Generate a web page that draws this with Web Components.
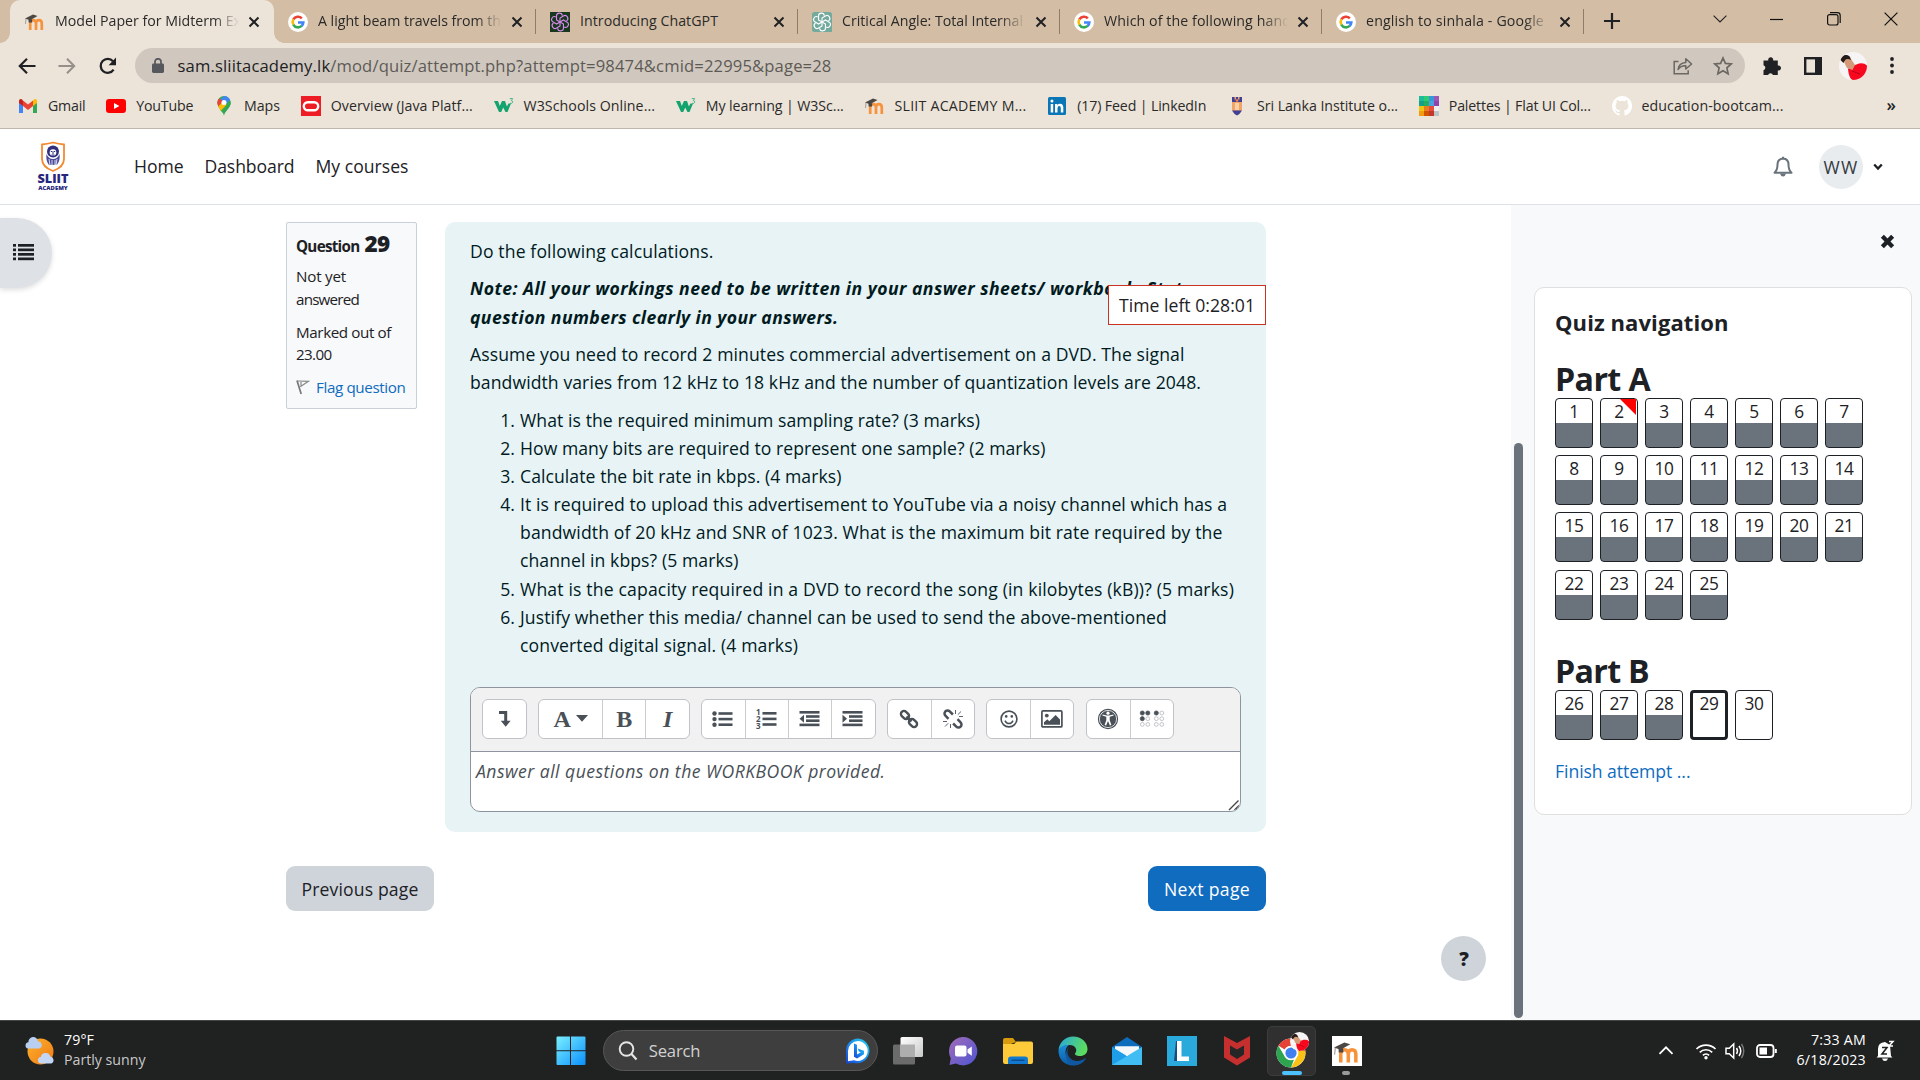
<!DOCTYPE html>
<html lang="en">
<head>
<meta charset="utf-8">
<title>Model Paper for Midterm Exam</title>
<style>
html,body{margin:0;padding:0}
body{width:1920px;height:1080px;overflow:hidden;background:#fff;font-family:"Open Sans","Noto Sans",sans-serif;color:#1d2125}
</style>
</head>
<body>
<desktop-screen></desktop-screen>
<script>
const define = (name, css, html, setup) => customElements.define(name, class extends HTMLElement {
  connectedCallback() {
    if (this.shadowRoot) return;
    const root = this.attachShadow({ mode: 'open' });
    root.innerHTML = `<style>*{box-sizing:border-box}${css}</style>` + (typeof html === 'function' ? html(this) : html);
    if (setup) setup(this, root);
  }
});

/* ---------- icons: [width, height, viewBox, body] ---------- */
const moodleM = `<path d="M5.2 18V11.6q0-3.4 2.9-3.4t2.9 3.4V18M11 11.6q0-3.4 2.9-3.4t2.9 3.4V18" fill="none" stroke="#f7923a" stroke-width="2.7"/><path d="M0 6.6 8 2.6l4.5 1.5L5 8.3z" fill="#4b4744"/><path d="M3.5 7.2h3.6v3.2H3.6z" fill="#4b4744"/><path d="M1 6.5 .5 12" stroke="#8a7f78" stroke-width=".7"/>`;
const avatar = `<clipPath id="av"><circle cx="14" cy="14" r="14"/></clipPath><g clip-path="url(#av)"><rect width="28" height="28" fill="#f6f4f4"/><path d="M9 17c2-2 4-4 7-4l4-1.500q5-1 8 2V20c-3 3-3 8-11 9-5-1-7-3-8-12z" fill="#f8081f"/><path d="M4 8c2-3 6-3 8-1l4 6-2.500 5L8 16z" fill="#d49a78"/><path d="M1.500 8C2 3 8 1.500 11 5l1 3C8 6 6 7 4.500 11z" fill="#251b18"/><path d="m13 19 8 3" stroke="#b50516" stroke-width="1"/></g>`;
const G = `<circle cx="12" cy="12" r="12" fill="#fff"/><g fill="none" stroke-width="3.1"><path d="M16.6 7.6A6.4 6.4 0 0 0 6.4 8.9" stroke="#ea4335"/><path d="M6.4 8.9a6.4 6.4 0 0 0 0 6.2" stroke="#fbbc05"/><path d="M6.4 15.1a6.4 6.4 0 0 0 10 1.6" stroke="#34a853"/><path d="M16.3 16.8a6.4 6.4 0 0 0 2.1-4.3H12" stroke="#4285f4"/></g>`;
const knot = c => `<g fill="none" stroke="${c}" stroke-width="1.35">${[0,60,120,180,240,300].map(a=>`<path d="M12 12V7.2l4-2.3a3.4 3.4 0 0 1 3.8 5.8" transform="rotate(${a} 12 12)"/>`).join('')}</g>`;
const w3 = `<path d="M0 5h4l1.800 5L8 5h3l1.900 5.500L14.500 7.500H17L13.500 16h-2L9.200 11.500 7.200 16H5z" fill="#12a36e"/><path d="M15.800 2.600h2.900L17.300 4.600q1.700.2 1.400 1.700-.4 1.500-2.700 1" fill="none" stroke="#3fb88b" stroke-width="1"/>`;
const K = '#495057';
const bars = (x, ys, w) => ys.map(y => `<rect x="${x}" y="${y}" width="${w}" height="2.6" fill="${K}"/>`).join('');
const chainA = `<rect x="1.5" y="3" width="9" height="6" rx="3" transform="rotate(45 6 6)" /><rect x="9.5" y="11" width="9" height="6" rx="3" transform="rotate(45 14 14)"/>`;
const ICONS = {
  moodle:[20,20,'0 0 20 20',moodleM],
  google:[20,20,'0 0 24 24',G],
  gptdark:[20,20,'0 0 24 24',`<rect width="24" height="24" fill="#17381f"/>${knot('#d98aec')}`],
  gpt:[20,20,'0 0 24 24',`<path d="M3 0h18q3 0 3 3v21H3q-3 0-3-3V3q0-3 3-3z" fill="#74aa9c"/>${knot('#fff')}`],
  close:[12,12,'0 0 12 12','<path d="m1.5 1.5 9 9m0-9-9 9" stroke="#202124" stroke-width="2"/>'],
  plus:[16,16,'0 0 16 16','<path d="M8 0v16M0 8h16" stroke="#202124" stroke-width="2.2"/>'],
  caption_down:[14,8,'0 0 14 8','<path d="m.6.6 6.4 6.4L13.4.6" fill="none" stroke="#202124" stroke-width="1.1"/>'],
  min:[14,14,'0 0 14 14','<path d="M0 7.5h13" stroke="#111" stroke-width="1.2"/>'],
  restore:[14,14,'0 0 14 14','<rect x=".6" y="2.6" width="10.4" height="10.4" rx="2" fill="none" stroke="#111" stroke-width="1.2"/><path d="M3 .7h7.4q2.8 0 2.8 2.8V11" fill="none" stroke="#111" stroke-width="1.2"/>'],
  xwin:[14,14,'0 0 14 14','<path d="m.6.6 12.8 12.8m0-12.8L.6 13.4" stroke="#111" stroke-width="1.2"/>'],
  back:[18,18,'0 0 18 18','<path d="M17.5 9H2M9 1.8 1.8 9 9 16.2" fill="none" stroke="#202124" stroke-width="2.2"/>'],
  fwd:[18,18,'0 0 18 18','<path d="M.5 9H16M9 1.8 16.2 9 9 16.2" fill="none" stroke="#96908a" stroke-width="2"/>'],
  reload:[20,18,'0 0 20 18','<path d="M15.6 12.6A7 7 0 1 1 15 4.2" fill="none" stroke="#202124" stroke-width="2.3"/><path d="M18 .6v7.6h-7.4z" fill="#202124"/>'],
  lock:[12,16,'0 0 12 16','<rect y="5.5" width="12" height="9.5" rx="1.4" fill="#55585d"/><path d="M3 6V3.8a3 3 0 0 1 6 0V6" fill="none" stroke="#55585d" stroke-width="1.7"/>'],
  share:[20,18,'0 0 20 18','<path d="M5.5 4.5H1.2v12.3h14v-3.6" fill="none" stroke="#6b6763" stroke-width="1.5"/><path d="M5 12.5q.8-6.5 7.8-7V1.8L18.6 7l-5.8 5V8.8q-5-.3-7.8 3.7z" fill="none" stroke="#6b6763" stroke-width="1.5" stroke-linejoin="round"/>'],
  star:[20,20,'0 0 20 20','<path d="m10 2 2.4 5.4 5.8.6-4.3 3.900 1.200 5.800L10 14.700l-5.100 3 1.200-5.800L1.800 8l5.800-.6z" fill="none" stroke="#6b6763" stroke-width="1.7"/>'],
  puzzle:[20,20,'0 0 20 20','<path d="M1.5 4.5h4.8a2.5 2.5 0 1 1 4.8 0h4.7v5a2.5 2.5 0 1 1 0 4.8V19h-4.9a2.5 2.5 0 0 0-4.8 0H1.500v-4.800a2.600 2.600 0 0 0 0-5z" fill="#202124"/>'],
  panel:[18,18,'0 0 18 18','<rect x="1.2" y="1.2" width="15.6" height="15.6" fill="none" stroke="#202124" stroke-width="2.4"/><path d="M11 1h6v16h-6z" fill="#202124"/>'],
  avatar:[28,28,'0 0 28 28',avatar],
  dots:[4,17,'0 0 4 17','<g fill="#202124"><circle cx="2" cy="2" r="1.9"/><circle cx="2" cy="8.5" r="1.9"/><circle cx="2" cy="15" r="1.9"/></g>'],
  gmail:[20,20,'0 0 20 20','<path d="M1 5v12h4V9z" fill="#4285f4"/><path d="M19 5v12h-4V9z" fill="#34a853"/><path d="m15 4.5-5 4-5-4V10l5 4 5-4z" fill="#ea4335"/><path d="M1 6V4.8Q1 3 2.8 3q1 0 2.2 1.4V10L1 7z" fill="#c5221f"/><path d="M19 6V4.8Q19 3 17.2 3q-1 0-2.2 1.4V10l4-3z" fill="#fbbc04"/>'],
  youtube:[20,20,'0 0 20 20','<rect y="3" width="20" height="14" rx="3.2" fill="#f00"/><path d="m8 7 5.4 3L8 13z" fill="#fff"/>'],
  maps:[20,20,'0 0 20 20','<path d="M10 20C9.600 15.500 3.400 12.500 3.400 6.600A6.600 6.600 0 0 1 16.600 6.600C16.600 12.500 10.400 15.500 10 20z" fill="#34a853"/><path d="M10 0a6.600 6.600 0 0 1 6 4L8 12.600 3.400 6.600z" fill="#4285f4"/><path d="M5.2 2.200 9 5.600 4.400 10.600Q2 5.500 5.200 2.200z" fill="#ea4335"/><path d="M16.200 4.200Q17.800 9 13.800 12.600l-4.200 5L6 14z" fill="#34a853"/><path d="m4.300 10.400 4.500-5 3.800 3.400L6.700 15z" fill="#fbbc04"/><circle cx="10" cy="6.600" r="2.500" fill="#fff"/>'],
  oracle:[20,20,'0 0 20 20','<rect width="20" height="20" fill="#ee1c25"/><rect x="2.8" y="6.3" width="14.4" height="8" rx="4" fill="none" stroke="#fff" stroke-width="2.4"/>'],
  w3:[20,20,'0 0 20 20',w3],
  linkedin:[20,20,'0 0 20 20','<rect x="1" y="1" width="18" height="18" rx="1.5" fill="#0a76b5"/><path d="M3.7 8h2.5v8.4H3.7zM8 8h2.4v1.2q.8-1.4 2.7-1.4 3.2 0 3.2 3.8v4.8h-2.5V12q0-2-1.5-2-1.800 0-1.800 2.200v4.200H8z" fill="#fff"/><circle cx="4.950" cy="5" r="1.500" fill="#fff"/>'],
  crest:[20,20,'0 0 20 20','<path d="M5 1h10v13q-1.500 3.500-5 5-3.500-1.500-5-5z" fill="#f0a46a"/><path d="M5 1h2.500v2.500h1.500V1h2v2.500h1.500V1H15v5H5z" fill="#3f3f95"/><path d="M8 7h4v7H8z" fill="#fbd0a2"/><path d="M5 14.500h10Q13 18 10 19.500 7 18 5 14.500z" fill="#3f3f95"/><circle cx="10" cy="4.500" r="1.300" fill="#f58a35"/>'],
  palettes:[20,20,'0 0 20 20',['#1abc9c','#2ecc71','#3498db','#9b59b6','#16a085','#27ae60','#4aa3df','#8e44ad','#f1c40f','#e67e22','#e74c3c','#ecf0f1','#f39c12','#d35400','#c0392b','#bdc3c7'].map((c,i)=>`<rect x="${i%4*5}" y="${(i>>2)*5}" width="5" height="5" fill="${c}"/>`).join('')],
  github:[20,20,'0 0 16 16','<path d="M8 0a8 8 0 0 0-2.500 15.600c.400.100.550-.170.550-.380v-1.500c-2.200.500-2.700-.950-2.700-.950-.360-.920-.890-1.170-.890-1.170-.720-.500.060-.490.060-.490.800.060 1.230.830 1.230.830.710 1.220 1.870.870 2.330.660.070-.520.280-.870.500-1.070-1.780-.200-3.640-.890-3.640-3.950 0-.870.310-1.590.820-2.150-.080-.200-.360-1.020.080-2.120 0 0 .670-.210 2.200.820a7.600 7.600 0 0 1 4 0c1.530-1.040 2.200-.820 2.200-.820.440 1.100.160 1.920.080 2.120.510.560.820 1.270.820 2.150 0 3.070-1.870 3.750-3.650 3.950.290.250.540.730.540 1.480v2.200c0 .210.150.460.550.380A8 8 0 0 0 8 0z" fill="#fff"/>'],
  sliit:[34,50,'0 0 34 50','<path d="M6 3.500q5-.5 11-2 6 1.500 11 2V18q0 8-11 12Q6 26 6 18z" fill="#fff" stroke="#f28a30" stroke-width="1.800"/><circle cx="17" cy="10.500" r="6" fill="#2f2f7d"/><circle cx="17" cy="11.500" r="3.300" fill="#fff"/><path d="M14.800 10.500h1.500m1.400 0h1.500m-3.700 3.500h3M17 10.500v2.500" stroke="#2f2f7d" stroke-width="1"/><path d="M10.500 13q-1 6.500 2.500 11l8-.2q3.500-4.500 2.500-10.800-2 5-6.500 5t-6.500-5z" fill="#4b4b9b"/><path d="m13 18 1 6m2-5v6m3-6v6m2-7-1 6" stroke="#fff" stroke-width=".800"/><text x="17" y="42.200" font-family="Open Sans" font-weight="800" font-size="12.400" text-anchor="middle" textLength="31" lengthAdjust="spacingAndGlyphs" fill="#26267c">SLIIT</text><text x="17" y="48.800" font-family="Open Sans" font-weight="800" font-size="5.600" text-anchor="middle" textLength="29.500" lengthAdjust="spacingAndGlyphs" fill="#26267c">ACADEMY</text>'],
  bell:[20,22,'0 0 20 22','<path d="M1.500 16.800q3-2.600 3-8.200Q4.500 3 10 2.600q5.500.400 5.500 6 0 5.600 3 8.200z" fill="none" stroke="#6a737b" stroke-width="2" stroke-linejoin="round"/><path d="M10 3V.8" stroke="#6a737b" stroke-width="2"/><path d="M7.200 17.500h5.600q-.4 3-2.800 3t-2.800-3z" fill="#6a737b"/>'],
  chev:[10,8,'0 0 10 8','<path d="M1.200 1.500 5 5.600l3.800-4.100" fill="none" stroke="#1d2125" stroke-width="2.300"/>'],
  list:[22,17,'0 0 22 17','<g fill="#1d2125">'+[0,4.5,9,13.5].map(y=>`<rect y="${y}" width="3" height="2.700"/><rect x="5" y="${y}" width="16" height="2.700"/>`).join('')+'</g>'],
  flag:[14,16,'0 0 14 16','<path d="M1 1.500 5.200 15" stroke="#777" stroke-width="1.700"/><path d="m1.500 2 11 .3-8.300 5.500M5 3v3.500" fill="none" stroke="#888" stroke-width="1.200"/>'],
  bigx:[15,15,'0 0 14 14','<path d="m2.200 2.200 9.600 9.600m0-9.600-9.600 9.600" stroke="#1d2125" stroke-width="4"/>'],
  leveldown:[14,18,'0 0 14 18',`<path d="M1 2.400h6.700V12" fill="none" stroke="${K}" stroke-width="3"/><path d="M2.800 10.800h9.800L7.700 16.800z" fill="${K}"/>`],
  caret:[12,7,'0 0 12 7',`<path d="M0 0h12L6 6.800z" fill="${K}"/>`],
  ul:[22,18,'0 0 22 18',bars(6.5,[2.2,7.8,13.4],14)+[3.5,9.1,14.7].map(y=>`<circle cx="2.500" cy="${y}" r="2.200" fill="${K}"/>`).join('')],
  ol:[22,20,'0 0 22 20',bars(6.5,[3,8.600,14.200],14)+[['1',6.2],['2',12.9],['3',19.600]].map(a=>`<text x="0" y="${a[1]}" font-family="Open Sans" font-weight="700" font-size="8" fill="${K}">${a[0]}</text>`).join('')],
  outdent:[22,18,'0 0 22 18',bars(.5,[1,13.600],20)+bars(7,[5.2,9.4],13.5)+`<path d="M5 4.800v8L.5 8.800z" fill="${K}"/>`],
  indent:[22,18,'0 0 22 18',bars(.5,[1,13.600],20)+bars(7,[5.2,9.4],13.5)+`<path d="M.5 4.800v8L5 8.800z" fill="${K}"/>`],
  link:[20,20,'0 0 20 20',`<g fill="none" stroke="${K}" stroke-width="2.400">${chainA}<path d="m7.500 7.500 5 5"/></g>`],
  unlink:[20,20,'0 0 20 20',`<g fill="none" stroke="${K}" stroke-width="2.500"><path d="M5.500 9.800 2.400 6.700a3 3 0 0 1 4.300-4.300l3.200 3.100M14.500 10.200l3.100 3.100a3 3 0 0 1-4.300 4.300l-3.200-3.100"/></g><path d="M12.500 5V1m2.300 4.700L18 2.500m-2 5h4M7.500 15v4m-2.300-4.700L2 17.500m2-5H0" stroke="${K}" stroke-width=".900"/>`],
  smile:[20,20,'0 0 20 20',`<circle cx="10" cy="10" r="7.900" fill="none" stroke="${K}" stroke-width="1.600"/><circle cx="7.200" cy="7.400" r="1.300" fill="${K}"/><circle cx="12.800" cy="7.400" r="1.300" fill="${K}"/><path d="M6 11.600q1.300 3 4 3t4-3" fill="none" stroke="${K}" stroke-width="1.500"/>`],
  image:[22,20,'0 0 22 20',`<rect x=".9" y="1.900" width="20" height="16" rx="1" fill="none" stroke="${K}" stroke-width="1.700"/><circle cx="5.800" cy="6.600" r="1.900" fill="${K}"/><path d="M3 15.800v-2.600l3.300-3 2 2L14.600 6l4.400 4.600v5.200z" fill="${K}"/>`],
  access:[22,22,'0 0 22 22',`<circle cx="11" cy="11" r="9.400" fill="${K}" stroke="${K}" stroke-width="1.500"/><circle cx="11" cy="11" r="8.600" fill="none" stroke="#fff" stroke-width=".800"/><circle cx="11" cy="5.200" r="1.600" fill="#fff"/><path d="m5.300 7.600 4 1.200v3.400L7.600 17l1.500.6L11 13l1.900 4.600 1.500-.6-1.700-4.800V8.800l4-1.200-.3-1.200-4.400 1.100h-2L5.600 6.400z" fill="#fff"/>`],
  braille:[26,18,'0 0 26 18',[[2.5,1],[8,1],[16.5,1],[22,0],[2.5,1,1],[8,0,1],[16.5,0,1],[22,0,1],[2.5,0,2],[8,0,2],[16.5,0,2],[22,0,2]].map(a=>`<circle cx="${a[0]+.8}" cy="${3+(a[2]||0)*5.7}" r="${a[1]?2.1:1.9}" fill="${a[1]?K:'none'}" stroke="${a[1]?K:'#a9adb1'}" stroke-width=".7"/>`).join('')],
  grip:[12,12,'0 0 12 12','<path d="M1 11 10.500 1.500M6.500 11 11 6.500" stroke="#444" stroke-width="1.400"/>'],
  weather:[30,30,'0 0 30 30','<defs><linearGradient id="s" x1="0" y1="0" x2="1" y2="1"><stop stop-color="#fbb22b"/><stop offset="1" stop-color="#f07a17"/></linearGradient></defs><circle cx="15.500" cy="15.500" r="13" fill="url(#s)"/><path d="M3 12.500a3.200 3.200 0 0 1 .4-6.300A4.800 4.800 0 0 1 13 5.600a3.500 3.500 0 0 1 1 6.900z" fill="#b9cff2"/><path d="M15.500 27.500a3.300 3.300 0 0 1 .3-6.500 5 5 0 0 1 9.600-.6 3.700 3.700 0 0 1 .8 7.100z" fill="#c3d6f6"/>'],
  win:[30,30,'0 0 30 30','<defs><linearGradient id="w" x1="0" y1="0" x2="1" y2="1"><stop stop-color="#7af0ff"/><stop offset="1" stop-color="#0a8ffc"/></linearGradient></defs><path d="M1.500.5H14v13.700H.5V1.500q0-1 1-1zM15 .5h13.500q1 0 1 1v12.700H15zM.5 15.200H14v13.900H1.500q-1 0-1-1zM15 15.200h14.500v12.900q0 1-1 1H15z" fill="url(#w)"/>'],
  search:[20,20,'0 0 20 20','<circle cx="8.500" cy="8" r="6.800" fill="none" stroke="#e6e6e6" stroke-width="1.900"/><path d="m13.500 13 5 5.500" stroke="#e6e6e6" stroke-width="2.200"/>'],
  bing:[26,26,'0 0 26 26','<defs><linearGradient id="b" x1="0" y1="1" x2="1" y2="0"><stop stop-color="#1743cf"/><stop offset=".5" stop-color="#1c8ef0"/><stop offset="1" stop-color="#24d3e8"/></linearGradient></defs><path d="M13 .5A12.400 12.400 0 1 1 9.500 25L1 25.500V12.500A12.200 12.200 0 0 1 13 .5z" fill="url(#b)"/><path d="M13 3a10 10 0 1 1-4 19.300l-6 .9V13A10 10 0 0 1 13 3z" fill="#fff"/><path d="m9 5.500 3 1.200v9.800l3.800-2.200-1.900-.9-1.200-3 6.300 2.300v3.500L12 20.500l-3-1.800z" fill="url(#b)"/>'],
  task:[32,30,'0 0 32 30','<defs><linearGradient id="t" x1="0" y1="0" x2="1" y2="1"><stop stop-color="#fff"/><stop offset="1" stop-color="#c9c9c9"/></linearGradient></defs><rect x="1" y="8.500" width="22" height="20" rx="1.500" fill="#6b6b6b"/><rect x="8.500" y="1" width="22.500" height="20" rx="1.500" fill="url(#t)"/><path d="M8.500 8.500H23V21H8.500z" fill="#aeaeae"/>'],
  chat:[32,30,'0 0 32 30','<defs><linearGradient id="c" x1="0" y1="0" x2="1" y2="1"><stop stop-color="#a26bb8"/><stop offset="1" stop-color="#4e55d4"/></linearGradient></defs><path d="M16 1a14.200 14.200 0 1 1-7 26.500L2.500 29l1.300-6.800A14.200 14.200 0 0 1 16 1z" fill="url(#c)"/><rect x="8" y="9.500" width="11.500" height="11" rx="2" fill="#fff"/><path d="m20.500 13.500 4.300-3v9.300l-4.300-3z" fill="#fff"/>'],
  explorer:[30,28,'0 0 30 28','<path d="M0 3q0-2 2-2h8l3 4-13 5z" fill="#d79b0d"/><path d="M0 7h11l2.500-2.500H28q2 0 2 2V25q0 2-2 2H2q-2 0-2-2z" fill="#ffca3a"/><path d="M5 27v-4.500q0-3 3-3h14q3 0 3 3V27z" fill="#1379cf"/><path d="M8.500 22.500h13v1.500h-13z" fill="#0a4e93"/>'],
  edge:[30,30,'0 0 30 30','<defs><linearGradient id="e" x1="0" y1="0" x2="1" y2=".3"><stop stop-color="#28a7de"/><stop offset="1" stop-color="#5adc60"/></linearGradient><linearGradient id="f" x1="0" y1="0" x2="0" y2="1"><stop stop-color="#1c8fdb"/><stop offset="1" stop-color="#0c59a4"/></linearGradient></defs><path d="M.5 14C1.500 6 7.500.5 15 .5c8.500 0 14.500 6 14.500 12.500 0 4.500-3.500 7-7.500 7-3.500 0-5.500-1.200-5-2.500 3-3.500.5-8.500-5.500-8.500C7 9 3 10.500.5 14z" fill="url(#e)"/><path d="M.5 14C3 10 7 8.500 11 9c-4 2.500-4.500 8.500-2 12.500 3.500 5 11 6 17 2.700C22.500 28.500 19 29.500 15 29.500 6.500 29.500 0 23 .5 14z" fill="url(#f)"/><path d="M11 11c-3.500 5-1 12 6 13.800 4 .8 8-.8 10.500-2.800q.8 0 .2.900-4 6-11 6.400C9 28.500 4.500 18 11 11z" fill="#11579f"/>'],
  mail:[30,28,'0 0 30 28','<path d="M0 10 15 0l15 10v5H0z" fill="#0d6cbb"/><path d="M3 9.500h24v10H3z" fill="#f2f7fb"/><path d="M0 10v18h30z" fill="#1e9de8"/><path d="M30 10v18H0z" fill="#42bdf3"/><path d="M3 9.500h24L15 19z" fill="#f5f8fb"/>'],
  lapp:[30,30,'0 0 30 30','<rect width="30" height="30" fill="#29a9dc"/><path d="M9 5h5v14l-2 6H7z" fill="#1b4c80"/><path d="M10 5h4.500v15.500H22V25H10z" fill="#fff"/>'],
  mcafee:[28,30,'0 0 28 30','<path d="M1 0 14 7 27 0v21.500L14 29.500 1 21.500z" fill="#c5302f"/><path d="m7 9.500 7 4 7-4V18.500l-7 4.500-7-4.500z" fill="#262626"/>'],
  chrome:[34,38,'0 0 34 38','<circle cx="16" cy="21" r="14.500" fill="#fff"/><path d="M16 6.500a14.500 14.500 0 0 1 12.600 7.300H16a7.200 7.200 0 0 0-6.300 3.700L3.500 13.700A14.500 14.500 0 0 1 16 6.500z" fill="#e54335"/><path d="M28.600 13.800A14.500 14.500 0 0 1 16 35.500l6.300-10.900a7.200 7.200 0 0 0 0-7.200z" fill="#fbc116"/><path d="M3.400 13.700 9.700 24.600A7.200 7.200 0 0 0 16 28.200q1.500 0 3-.6L16 35.500A14.500 14.500 0 0 1 3.400 13.700z" fill="#2da44f"/><path d="M16 13.800h12.600q1.500 3 1.500 5H21z" fill="#e54335"/><circle cx="16" cy="21" r="7" fill="#fff"/><circle cx="16" cy="21" r="5.600" fill="#3f7fee"/><g transform="translate(15 0) scale(.68)">'+avatar+'</g>'],
  moodlebox:[30,30,'0 0 30 30','<rect width="30" height="30" fill="#fff"/><g transform="translate(2 3) scale(1.300)">'+moodleM+'</g>'],
  up:[16,9,'0 0 16 9','<path d="m1.500 7.800 6.500-6.500 6.500 6.500" fill="none" stroke="#fff" stroke-width="1.800"/>'],
  wifi:[22,18,'0 0 22 18','<g fill="none" stroke="#fff" stroke-width="1.700"><path d="M1.500 7a13.500 13.500 0 0 1 19 0M4.800 10.300a8.800 8.800 0 0 1 12.400 0M7.900 13.300a4.400 4.400 0 0 1 6.200 0"/></g><circle cx="11" cy="15.700" r="1.700" fill="#fff"/>'],
  sound:[20,18,'0 0 20 18','<path d="M1 6.200h3.300L8.700 2v14l-4.400-4.200H1z" fill="none" stroke="#fff" stroke-width="1.500"/><path d="M11.500 6q2 3 0 6m2.500-8q3.500 5 0 10" fill="none" stroke="#fff" stroke-width="1.500"/><path d="M16.500 2q4.500 7 0 14" fill="none" stroke="#777" stroke-width="1.400"/>'],
  battery:[22,14,'0 0 22 14','<rect x="1" y="1" width="16.500" height="12" rx="3" fill="none" stroke="#fff" stroke-width="1.800"/><rect x="3.500" y="3.500" width="7.500" height="7" fill="#fff"/><path d="M19.800 5v4" stroke="#fff" stroke-width="2"/>'],
  snooze:[20,22,'0 0 20 22','<path d="M2 16V9q0-6.500 7-7l5 3 1 11 1.500 1.500H.5zM6 18.500h6q-.8 2.500-3 2.500t-3-2.500z" fill="#fff"/><path d="M6 7.500h5l-5 6.500h5" fill="none" stroke="#222" stroke-width="1.600"/><path d="M13 1.500h4l-4 4.500h4" fill="none" stroke="#fff" stroke-width="1.500"/>']
};
define('ui-icon', ':host{display:block;flex:none;line-height:0}svg{display:block}', el => {
  const [w, h, vb, body] = ICONS[el.getAttribute('name')];
  return `<svg width="${w}" height="${h}" viewBox="${vb}">${body}</svg>`;
});

/* ---------- browser chrome ---------- */
define('browser-tab', `
:host{display:flex;align-items:center;width:262px;height:43px;padding-left:14px;flex:none;font-size:14.2px;color:#2b2a29;position:relative}
.t{width:184px;margin:-2px 0 0 10px;overflow:hidden;white-space:nowrap;line-height:24px;-webkit-mask-image:linear-gradient(90deg,#000 86%,transparent 100%);mask-image:linear-gradient(90deg,#000 86%,transparent 100%)}
:host([short]) .t{-webkit-mask-image:none;mask-image:none}
.c{margin-left:9px}
i{margin-left:auto;width:1px;height:25px;background:#8f7d68}
:host([active]) i{visibility:hidden}
:host([active]){width:264px;padding-left:15px;background:#ece4d9;border-radius:10px 10px 0 0}
:host([active])::before,:host([active])::after{content:"";position:absolute;bottom:0;width:10px;height:10px}
:host([active])::before{left:-10px;background:radial-gradient(circle at 0 0,transparent 9.5px,#ece4d9 10px)}
:host([active])::after{right:-10px;background:radial-gradient(circle at 100% 0,transparent 9.5px,#ece4d9 10px)}`,
 el => `<ui-icon name="${el.getAttribute('icon')}"></ui-icon><div class="t"><slot></slot></div><ui-icon class="c" name="close"></ui-icon><i></i>`);

define('tab-strip', `
:host{display:flex;height:43px;background:#d3bea5;padding-left:10px;align-items:center}
.plus{margin-left:20px;margin-top:-1px}
.win{margin-left:auto;display:flex;align-items:center;height:37px;align-self:flex-start;gap:43px;padding-right:22px}`,
`<browser-tab active icon="moodle"><x-text w="186">Model Paper for Midterm Ex</x-text></browser-tab>
<browser-tab icon="google"><x-text w="183">A light beam travels from th</x-text></browser-tab>
<browser-tab icon="gptdark" short><x-text w="138">Introducing ChatGPT</x-text></browser-tab>
<browser-tab icon="gpt"><x-text w="181">Critical Angle: Total Internal</x-text></browser-tab>
<browser-tab icon="google"><x-text w="187">Which of the following hand</x-text></browser-tab>
<browser-tab icon="google"><x-text w="178">english to sinhala - Google</x-text></browser-tab>
<ui-icon class="plus" name="plus"></ui-icon>
<div class="win"><ui-icon name="caption_down"></ui-icon><ui-icon name="min"></ui-icon><ui-icon name="restore"></ui-icon><ui-icon name="xwin"></ui-icon></div>`);

define('address-bar', `
:host{display:flex;height:45px;background:#ece4d9;align-items:center;padding-left:18px}
.nav{display:flex;align-items:center;gap:22px;width:117px}
.nav>:last-child{margin-left:0}
.box{display:flex;align-items:center;width:1610px;height:35px;border-radius:18px;background:#d0c8be;padding:0 12px 0 17px;font-size:16.6px;color:#5d5a56;line-height:30px}
.box b{font-weight:400;color:#202124}
.lk{margin-right:13.5px}
.r{margin-left:auto;display:flex;gap:20px;align-items:center}
.ext{display:flex;align-items:center;margin-left:17px}`,
`<div class="nav"><ui-icon name="back"></ui-icon><ui-icon name="fwd"></ui-icon><ui-icon name="reload"></ui-icon></div>
<div class="box"><ui-icon class="lk" name="lock"></ui-icon><x-text w="654"><b>sam.sliitacademy.lk</b>/mod/quiz/attempt.php?attempt=98474&amp;cmid=22995&amp;page=28</x-text><div class="r"><ui-icon name="share"></ui-icon><ui-icon name="star"></ui-icon></div></div>
<div class="ext"><ui-icon name="puzzle"></ui-icon><ui-icon name="panel" style="margin-left:22px"></ui-icon><ui-icon name="avatar" style="margin-left:17px"></ui-icon><ui-icon name="dots" style="margin-left:23px"></ui-icon></div>`);

define('bookmark-item', `:host{display:flex;align-items:center;gap:10px}`, el => `<ui-icon name="${el.getAttribute('icon')}"></ui-icon><x-text w="${el.getAttribute('w')}">${el.getAttribute('label')}</x-text>`);
define('bookmark-bar', `
:host{display:flex;height:41px;background:#ece4d9;border-bottom:1px solid #bfb6ac;padding:0 24px 4px 18px;gap:20.75px;align-items:center;font-size:14.2px;line-height:24px;color:#2b2a29}
span{margin:-3px 0 0 auto;font-weight:600;font-size:17px;color:#202124}`,
[['gmail',37.5,'Gmail'],['youtube',57,'YouTube'],['maps',36,'Maps'],['oracle',142,'Overview (Java Platf...'],['w3',131.5,'W3Schools Online...'],['w3',138,'My learning | W3Sc...'],['moodle',132,'SLIIT ACADEMY M...'],['linkedin',129,'(17) Feed | LinkedIn'],['crest',141,'Sri Lanka Institute o...'],['palettes',142,'Palettes | Flat UI Col...'],['github',142,'education-bootcam...']].map(b=>`<bookmark-item icon="${b[0]}" w="${b[1]}" label="${b[2]}"></bookmark-item>`).join('') + '<span>»</span>');

/* ---------- site ---------- */
define('site-header', `
:host{display:flex;height:76px;border-bottom:1px solid #dee2e6;align-items:center;padding:0 37px 0 36px;font-size:17.6px;line-height:28px;background:#fff}
nav{display:flex;gap:21px;margin:-2px 0 0 64px}
.u{margin-left:auto;display:flex;align-items:center}
.a{width:44px;height:44px;border-radius:50%;background:#e9ecef;display:flex;align-items:center;justify-content:center;margin:0 10px 0 26px;color:#343a40}`,
`<ui-icon name="sliit" style="margin-top:-2px"></ui-icon><nav><x-text w="49.5">Home</x-text><x-text w="90">Dashboard</x-text><x-text w="93">My courses</x-text></nav>
<div class="u"><ui-icon name="bell"></ui-icon><div class="a"><x-text w="35">WW</x-text></div><ui-icon name="chev"></ui-icon></div>`);

define('question-info', `
:host{display:block;width:131px;height:187px;background:#f8f9fa;border:1px solid #cad0d7;border-radius:2px;padding:6px 9px 0;font-size:15.2px;line-height:22.5px;flex:none}
h3{margin:0;font-size:15.2px;line-height:30px;height:30px;font-weight:700;display:flex;align-items:baseline;gap:5px}
h3 b{font-size:22.500px}
div{margin-top:6px}
.m{margin-top:10.5px}
.f{display:flex;margin-top:10.5px;color:#0f6cbf;align-items:center;gap:6px}`,
`<h3><x-text w="63.500">Question</x-text><b><x-text w="25">29</x-text></b></h3>
<div><x-text w="50">Not yet</x-text><br><x-text w="63">answered</x-text></div>
<div class="m"><x-text w="95">Marked out of</x-text><br><x-text w="35.5">23.00</x-text></div>
<div class="f"><ui-icon name="flag"></ui-icon><x-text w="89.5">Flag question</x-text></div>`);

define('tool-group', `
:host{display:flex;height:40px;background:#fff;border:1px solid #bfc3c7;border-radius:6px;flex:none}
::slotted(*){width:43.200px;display:flex;align-items:center;justify-content:center;border-left:1px solid #ccc;color:#495057;font:700 24px/36px "Liberation Serif",serif}
::slotted(:first-child){border-left:0;}
::slotted(.wide){width:63px;gap:5px}`, '<slot></slot>');

define('rich-editor', `
:host{display:block;width:771px;height:125px;border:1px solid #8f959e;border-radius:10px;overflow:hidden;background:#fff;position:relative}
.bar{height:64px;background:#f1f1f1;border-bottom:1px solid #8f959e;display:flex;gap:11.100px;padding:11px 11px}
.txt{padding:5.500px 5px;font-size:17.6px;font-style:italic;line-height:28px;color:#495057}
.g{position:absolute;right:0;bottom:0}`,
`<div class="bar"><tool-group><span><ui-icon name="leveldown"></ui-icon></span></tool-group>
<tool-group><span class="wide">A<ui-icon name="caret"></ui-icon></span><span>B</span><span><em>I</em></span></tool-group>
<tool-group><span><ui-icon name="ul"></ui-icon></span><span><ui-icon name="ol"></ui-icon></span><span><ui-icon name="outdent"></ui-icon></span><span><ui-icon name="indent"></ui-icon></span></tool-group>
<tool-group><span><ui-icon name="link"></ui-icon></span><span><ui-icon name="unlink"></ui-icon></span></tool-group>
<tool-group><span><ui-icon name="smile"></ui-icon></span><span><ui-icon name="image"></ui-icon></span></tool-group>
<tool-group><span><ui-icon name="access"></ui-icon></span><span><ui-icon name="braille"></ui-icon></span></tool-group></div>
<div class="txt"><x-text w="409.5">Answer all questions on the WORKBOOK provided.</x-text></div><ui-icon class="g" name="grip"></ui-icon>`);

define('question-body', `
:host{display:block;width:821px;height:610px;background:#e7f3f5;border-radius:10px;padding:15px 25px 0;font-size:17.6px;line-height:28.100px;color:#001a1e;position:relative;flex:none}
p{margin:0 0 9.400px}
.n{font-weight:700;font-style:italic}
ol{margin:0 0 27.300px;padding:0 0 0 49px}
li{padding:0 0 0 1px}
li.k{margin-top:1px}
li::marker{letter-spacing:-.2px}
x-text{vertical-align:top}
.timer{position:absolute;left:663px;top:63px;width:158px;height:40px;border:1px solid #ca3120;background:#fff;color:#1d2125;padding:5px 0 0 10px}`,
`<p><x-text w="243.5">Do the following calculations.</x-text></p>
<p class="n"><x-text w="723">Note: All your workings need to be written in your answer sheets/ workbook. State</x-text><br><x-text w="368.5">question numbers clearly in your answers.</x-text></p>
<p><x-text w="714.500">Assume you need to record 2 minutes commercial advertisement on a DVD. The signal</x-text><br><x-text w="731">bandwidth varies from 12 kHz to 18 kHz and the number of quantization levels are 2048.</x-text></p>
<ol><li><x-text w="460">What is the required minimum sampling rate? (3 marks)</x-text></li>
<li><x-text w="525.5">How many bits are required to represent one sample? (2 marks)</x-text></li>
<li><x-text w="321.500">Calculate the bit rate in kbps. (4 marks)</x-text></li>
<li><x-text w="707">It is required to upload this advertisement to YouTube via a noisy channel which has a</x-text><br><x-text w="702.500">bandwidth of 20 kHz and SNR of 1023. What is the maximum bit rate required by the</x-text><br><x-text w="218.500">channel in kbps? (5 marks)</x-text></li>
<li class="k"><x-text w="714">What is the capacity required in a DVD to record the song (in kilobytes (kB))? (5 marks)</x-text></li>
<li><x-text w="647">Justify whether this media/ channel can be used to send the above-mentioned</x-text><br><x-text w="278">converted digital signal. (4 marks)</x-text></li></ol>
<rich-editor></rich-editor>
<div class="timer"><x-text w="136">Time left 0:28:01</x-text></div>`);

define('page-button', `
:host{display:flex;align-items:center;justify-content:center;height:45px;width:148px;border-radius:9px;background:#ced4da;font-size:17.6px;line-height:28px;color:#1d2125}
:host([primary]){width:118px;background:#0f6cbf;color:#fff}`, '<slot></slot>');

define('nav-cell', `
:host{display:block;width:38px;height:50px;border:1px solid #1d2125;border-radius:4px;text-align:center;font-size:17.3px;line-height:26px;background:#fff;color:#1d2125;overflow:hidden;position:relative;letter-spacing:-.3px}
:host([done]){background:linear-gradient(#fff 24px,#6a737b 24px)}
:host([current]){border-width:3px;line-height:22px}
:host([flagged])::after{content:"";position:absolute;right:1px;top:0;border:8px solid transparent;border-top-color:#ff0000;border-right-color:#ff0000}`, '<slot></slot>');

const cell = (n, a) => `<nav-cell ${a}>${n}</nav-cell>`;
define('quiz-nav', `
:host{display:block;width:378px;height:528px;margin-left:23px;background:#fff;border:1px solid #dfdfdf;border-radius:10px;padding:20px 20px 0}
h4{margin:0;font-size:22px;line-height:28px;height:28px}
h3{margin:25px 0 0;font-size:32.200px;line-height:36px;height:37px}
h3.b{margin-top:33px}
.g{display:grid;grid-template-columns:repeat(7,38px);column-gap:7px;row-gap:7.400px}
a{display:block;margin:17px 0 0;color:#0f6cbf;font-size:17.6px;line-height:28px}`,
`<h4><x-text w="173.5">Quiz navigation</x-text></h4><h3><x-text w="95">Part A</x-text></h3><div class="g">${Array.from({length:25},(_,i)=>cell(i+1,'done'+(i===1?' flagged':''))).join('')}</div>
<h3 class="b"><x-text w="94">Part B</x-text></h3><div class="g">${[26,27,28].map(n=>cell(n,'done')).join('')}${cell(29,'current')}${cell(30,'')}</div><a><x-text w="135.500">Finish attempt ...</x-text></a>`);

define('quiz-page', `
:host{display:flex;height:815px;background:#fff}
.left{width:286px;padding-top:13px;flex:none}
.drawer{width:52px;height:70px;border-radius:0 35px 35px 0;background:#dee2e6;box-shadow:0 2px 5px rgba(0,0,0,.13);padding:26px 0 0 13px}
main{width:980px;padding-top:17px;flex:none}
.q{display:flex;justify-content:space-between}
.b{display:flex;justify-content:space-between;margin-top:34px}
.mid{width:245px;flex:none;display:flex;align-items:flex-end;justify-content:flex-end;padding:0 25px 39px 0}
.help{width:45px;height:45px;border-radius:50%;background:#ced4da;display:flex;align-items:center;justify-content:center;font:800 19px/30px "Open Sans";color:#1d2125;padding-left:1px}
aside{width:409px;background:#f8f9fa;display:flex}
.sb{width:9px;height:575px;border-radius:5px;background:#6a737b;margin:238px 0 0 3px;flex:none}
.c{width:397px;margin-left:-12px}
.x{height:81.500px;padding:28.500px 0 0 369px}`,
`<div class="left"><div class="drawer"><ui-icon name="list"></ui-icon></div></div>
<main><div class="q"><question-info></question-info><question-body></question-body></div>
<div class="b"><page-button><x-text w="117">Previous page</x-text></page-button><page-button primary><x-text w="86">Next page</x-text></page-button></div></main>
<div class="mid"><div class="help">?</div></div>
<aside><div class="sb"></div><div class="c"><div class="x"><ui-icon name="bigx"></ui-icon></div><quiz-nav></quiz-nav></div></aside>`);

define('task-app', `
:host{display:flex;width:49px;height:50px;margin:0 3px;flex:none;align-items:center;justify-content:center;border-radius:5px;position:relative}
:host([active]){background:#303030;border:1px solid #3c3c3c}
:host([active])::after{content:"";position:absolute;bottom:0;left:14px;width:20px;height:4px;border-radius:2px;background:#4cc2ff}
:host([running])::after{content:"";position:absolute;bottom:1px;left:20px;width:8px;height:4px;border-radius:2px;background:#9a9a9a}`, el => `<ui-icon name="${el.getAttribute('icon')}"></ui-icon>`);
define('task-bar', `
:host{display:flex;height:60px;background:#202121;border-top:1px solid #454747;align-items:center;color:#fff;font-size:14.2px;line-height:20px;padding-left:25px}
.w{display:flex;gap:9px;width:518px;align-items:center}
.w div,.time{display:flex;flex-direction:column;align-items:flex-start;margin-top:-2px}
.w x-text+x-text{color:#c9c9c9}
.s{display:flex;align-items:center;width:275px;height:41px;border-radius:21px;border:1px solid #575757;background:#3e3e3e;margin:0 3px 0 5px;padding:0 6px 0 14px;font-size:16.6px;color:#d2d2d2}
.s x-text{margin-left:11px}.s ui-icon:last-child{margin-left:auto}
task-app{margin-right:2.800px}
.tray{margin-left:auto;display:flex;align-items:center;padding-right:24px}
.tray .time{align-items:flex-end;margin:-2px 10px 0 19px}`,
`<div class="w"><ui-icon name="weather"></ui-icon><div><x-text w="30">79°F</x-text><x-text w="81.500">Partly sunny</x-text></div></div>
<task-app icon="win"></task-app><div class="s"><ui-icon name="search"></ui-icon><x-text w="51.500">Search</x-text><ui-icon name="bing"></ui-icon></div>
<task-app icon="task"></task-app><task-app icon="chat"></task-app><task-app icon="explorer"></task-app><task-app icon="edge"></task-app><task-app icon="mail"></task-app><task-app icon="lapp"></task-app><task-app icon="mcafee"></task-app><task-app active icon="chrome"></task-app><task-app running icon="moodlebox"></task-app>
<div class="tray"><ui-icon name="up"></ui-icon><ui-icon name="wifi" style="margin-left:21px"></ui-icon><ui-icon name="sound" style="margin-left:8px"></ui-icon><ui-icon name="battery" style="margin-left:11px"></ui-icon><div class="time"><x-text w="55">7:33 AM</x-text><x-text w="69.500">6/18/2023</x-text></div><ui-icon name="snooze"></ui-icon></div>`);

define('desktop-screen', ':host{display:flex;flex-direction:column;width:1920px;height:1080px;overflow:hidden}',
 '<tab-strip></tab-strip><address-bar></address-bar><bookmark-bar></bookmark-bar><site-header></site-header><quiz-page></quiz-page><task-bar></task-bar>');

/* One line of text, tracked so that it fills the width given in "w". */
define('x-text', ':host{display:inline-block;white-space:nowrap;flex:none}', '<slot></slot>', el => {
  const w = parseFloat(el.getAttribute('w')), n = el.textContent.length;
  el.style.letterSpacing = (w - el.getBoundingClientRect().width) / n + 'px';
});
</script>
</body>
</html>
